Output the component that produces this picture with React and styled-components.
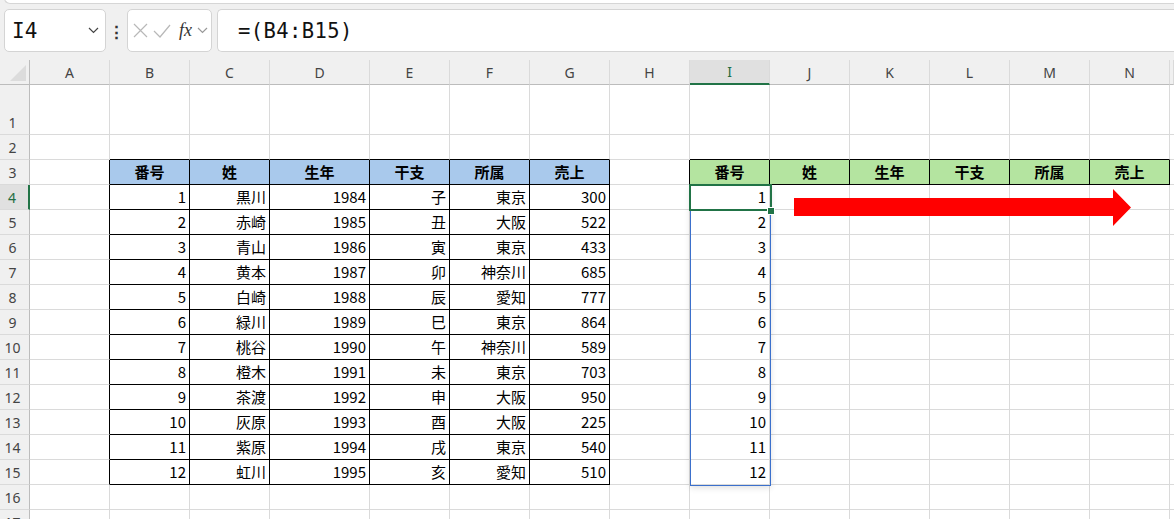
import React from "react";
import styled, { createGlobalStyle, css } from "styled-components";

const GlobalStyle = createGlobalStyle`
  html, body { margin: 0; padding: 0; background: #fff; overflow: hidden; }
  body { font-family: "Noto Sans CJK JP", "Noto Sans", sans-serif; }
`;

const COLS = [
  { key: "A", w: 80 }, { key: "B", w: 80 }, { key: "C", w: 80 }, { key: "D", w: 100 },
  { key: "E", w: 80 }, { key: "F", w: 80 }, { key: "G", w: 80 }, { key: "H", w: 80 },
  { key: "I", w: 80 }, { key: "J", w: 80 }, { key: "K", w: 80 }, { key: "L", w: 80 },
  { key: "M", w: 80 }, { key: "N", w: 80 }, { key: "O", w: 0, hidden: true },
];

const HEAD = ["番号", "姓", "生年", "干支", "所属", "売上"];
const DATA = [
  [1, "黒川", 1984, "子", "東京", 300],
  [2, "赤崎", 1985, "丑", "大阪", 522],
  [3, "青山", 1986, "寅", "東京", 433],
  [4, "黄本", 1987, "卯", "神奈川", 685],
  [5, "白崎", 1988, "辰", "愛知", 777],
  [6, "緑川", 1989, "巳", "東京", 864],
  [7, "桃谷", 1990, "午", "神奈川", 589],
  [8, "橙木", 1991, "未", "東京", 703],
  [9, "茶渡", 1992, "申", "大阪", 950],
  [10, "灰原", 1993, "酉", "大阪", 225],
  [11, "紫原", 1994, "戌", "東京", 540],
  [12, "虹川", 1995, "亥", "愛知", 510],
];

// which table a cell belongs to (row = 1-based sheet row, col = 0-based A..O)
const tableOf = (r, c) => {
  if (r >= 3 && r <= 15 && c >= 1 && c <= 6) return "blue";
  if (r === 3 && c >= 8 && c <= 13) return "green";
  return null;
};

const cellValue = (r, c) => {
  if (r === 3 && c >= 1 && c <= 6) return HEAD[c - 1];
  if (r === 3 && c >= 8 && c <= 13) return HEAD[c - 8];
  if (r >= 4 && r <= 15 && c >= 1 && c <= 6) return DATA[r - 4][c - 1];
  if (r >= 4 && r <= 15 && c === 8) return r - 3;
  return "";
};

const Page = styled.div`
  width: 1174px;
  height: 519px;
  overflow: hidden;
  background: #fff;
`;

const Toolbar = styled.div`
  position: relative;
  height: 60px;
  background: #f0f0f0;
  display: flex;
  align-items: flex-start;
  padding: 9px 0 0 4px;
  box-sizing: border-box;
`;

const RibbonEdge = styled.div`
  position: absolute;
  left: 4px;
  right: 0;
  top: -6px;
  height: 8px;
  background: #fff;
  border: 1px solid #d6d6d6;
  border-right: none;
  border-radius: 0 0 0 6px;
`;

const Box = styled.div`
  height: 43px;
  box-sizing: border-box;
  background: #fff;
  border: 1px solid #d4d4d4;
  border-radius: 5px;
  display: flex;
  align-items: center;
  ${({ $open }) => $open && css`
    border-right: none;
    border-radius: 5px 0 0 5px;
    flex: 1;
  `}
`;

const NameBox = styled(Box)`
  width: 102px;
  padding: 0 6px 0 7px;
  justify-content: space-between;
`;

const NameText = styled.span`
  font-family: "DejaVu Sans Mono", monospace;
  font-size: 21px;
  color: #111;
`;

const Dots = styled.div`
  width: 21px;
  height: 43px;
  display: flex;
  align-items: center;
  justify-content: center;
  font-size: 17px;
  color: #333;
  font-weight: bold;
`;

const FnBox = styled(Box)`
  width: 85px;
  padding: 0 3px 0 5px;
  gap: 5px;
  margin-right: 5px;
`;

const Fx = styled.span`
  font-family: "Liberation Serif", serif;
  font-style: italic;
  font-size: 18px;
  color: #333;
  margin-left: 3px;
`;

const FormulaText = styled.span`
  font-family: "DejaVu Sans Mono", monospace;
  font-size: 20.5px;
  color: #111;
  padding-left: 20px;
  letter-spacing: 0.4px;
`;

const Sheet = styled.div`
  position: relative;
`;

const Row = styled.div`
  display: flex;
  height: ${({ $h }) => $h}px;
`;

const Corner = styled.div`
  position: relative;
  width: 30px;
  flex: none;
  box-sizing: border-box;
  background: #f0f0f0;
  border-right: 1px solid #bcbcbc;
  border-bottom: 1px solid #bcbcbc;
  &::after {
    content: "";
    position: absolute;
    right: 3px;
    bottom: 3px;
    border-style: solid;
    border-width: 0 0 16px 16px;
    border-color: transparent transparent #dcdcdc transparent;
  }
`;

const ColHead = styled.div`
  width: ${({ $w }) => ($w ? `${$w}px` : "auto")};
  flex: ${({ $w }) => ($w ? "none" : "1")};
  box-sizing: border-box;
  background: ${({ $active }) => ($active ? "#e0e0e0" : "#f0f0f0")};
  border-right: 1px solid #dadada;
  border-bottom: ${({ $active }) => ($active ? "2px solid #217346" : "1px solid #bcbcbc")};
  display: flex;
  align-items: center;
  justify-content: center;
  font-family: "Noto Sans", sans-serif;
  font-size: 14px;
  color: ${({ $active }) => ($active ? "#1f6e43" : "#444")};
`;

const RowHead = styled.div`
  width: 30px;
  flex: none;
  box-sizing: border-box;
  background: ${({ $active }) => ($active ? "#e0e0e0" : "#f0f0f0")};
  border-right: ${({ $active }) => ($active ? "2px solid #217346" : "1px solid #bcbcbc")};
  border-bottom: 1px solid #dadada;
  display: flex;
  align-items: flex-end;
  justify-content: center;
  padding: 0 4px 2px 0;
  font-family: "Noto Sans", sans-serif;
  font-size: 14px;
  color: ${({ $active }) => ($active ? "#1f6e43" : "#444")};
`;

const fills = { blue: "#a9c9ec", green: "#b4e4a0" };

const Cell = styled.div`
  width: ${({ $w }) => ($w ? `${$w}px` : "auto")};
  flex: ${({ $w }) => ($w ? "none" : "1")};
  box-sizing: border-box;
  border-right: 1px solid ${({ $br }) => ($br ? "#000" : "#dadada")};
  border-bottom: 1px solid ${({ $bb }) => ($bb ? "#000" : "#dadada")};
  background: ${({ $fill }) => ($fill ? fills[$fill] : "#fff")};
  display: flex;
  align-items: flex-end;
  justify-content: ${({ $head }) => ($head ? "center" : "flex-end")};
  padding: 0 3px 1px 3px;
  font-size: 15px;
  line-height: 22px;
  font-weight: ${({ $head }) => ($head ? 700 : 400)};
  color: #000;
  white-space: nowrap;
  overflow: hidden;
`;

const RangeBox = styled.div`
  position: absolute;
  left: 690px;
  top: 125px;
  width: 81px;
  height: 301px;
  box-sizing: border-box;
  border: 1px solid #3b70cc;
  box-shadow: 0 2px 6px rgba(0, 0, 0, 0.12);
  pointer-events: none;
`;

const ActiveBox = styled.div`
  position: absolute;
  left: 689px;
  top: 124px;
  width: 83px;
  height: 27px;
  box-sizing: border-box;
  border: 2px solid #217346;
  pointer-events: none;
`;

const FillHandle = styled.div`
  position: absolute;
  left: 767px;
  top: 147px;
  width: 6px;
  height: 6px;
  background: #217346;
  border: 1px solid #fff;
`;

const Arrow = styled.svg`
  position: absolute;
  left: 794px;
  top: 129px;
`;

const Chevron = ({ color = "#555" }) => (
  <svg width="11" height="7" viewBox="0 0 11 7">
    <path d="M1 1l4.5 4.5L10 1" fill="none" stroke={color} strokeWidth="1.2" />
  </svg>
);

const ROW_HEIGHTS = Array.from({ length: 17 }, (_, i) => (i === 0 ? 50 : 25));

export default function App() {
  return (
    <Page>
      <GlobalStyle />
      <Toolbar>
        <RibbonEdge />
        <NameBox>
          <NameText>I4</NameText>
          <Chevron color="#444" />
        </NameBox>
        <Dots>⋮</Dots>
        <FnBox>
          <svg width="15" height="15" viewBox="0 0 15 15">
            <path d="M1 1l13 13M14 1L1 14" stroke="#b8b8b8" strokeWidth="1.2" />
          </svg>
          <svg width="18" height="14" viewBox="0 0 18 14">
            <path d="M1 7l6 6L17 1" fill="none" stroke="#b8b8b8" strokeWidth="1.2" />
          </svg>
          <Fx>fx</Fx>
          <Chevron color="#999" />
        </FnBox>
        <Box $open>
          <FormulaText>=(B4:B15)</FormulaText>
        </Box>
      </Toolbar>
      <Sheet>
        <Row $h={25}>
          <Corner />
          {COLS.map((c, i) => (
            <ColHead key={c.key} $w={c.w} $active={i === 8}>{c.hidden ? "" : c.key}</ColHead>
          ))}
        </Row>
        {ROW_HEIGHTS.map((h, ri) => {
          const r = ri + 1;
          return (
            <Row key={r} $h={h}>
              <RowHead $active={r === 4}>{r}</RowHead>
              {COLS.map((c, ci) => {
                const t = tableOf(r, ci);
                const br = t || tableOf(r, ci + 1);
                const bb = t || tableOf(r + 1, ci);
                return (
                  <Cell
                    key={c.key}
                    $w={c.w}
                    $fill={r === 3 ? t : null}
                    $head={r === 3 && !!t}
                    $br={!!br}
                    $bb={!!bb}
                  >
                    {cellValue(r, ci)}
                  </Cell>
                );
              })}
            </Row>
          );
        })}
        <RangeBox />
        <ActiveBox />
        <FillHandle />
        <Arrow width="338" height="37" viewBox="0 0 338 37">
          <path d="M0 9h319V0l18 18.5L319 37V27H0z" fill="#ff0000" />
        </Arrow>
      </Sheet>
    </Page>
  );
}
